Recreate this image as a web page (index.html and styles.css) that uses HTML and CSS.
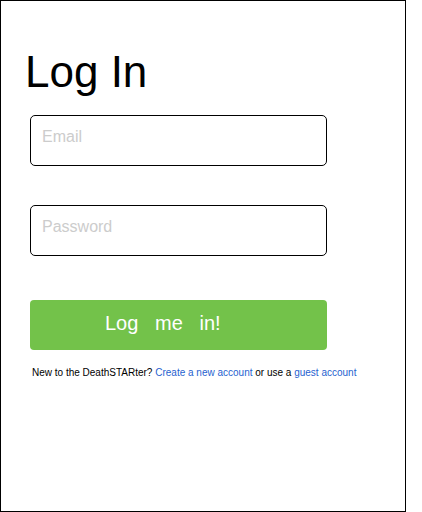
FILE: index.html
```html
<!DOCTYPE html>
<html lang="en">
<head>
<meta charset="utf-8">
<meta name="viewport" content="width=device-width, initial-scale=1">
<title>Log In</title>
<link rel="stylesheet" href="styles.css">
</head>
<body>
<main class="panel">
  <h1 class="title">Log In</h1>
  <form class="form">
    <input class="field" type="email" placeholder="Email" aria-label="Email">
    <input class="field" type="password" placeholder="Password" aria-label="Password">
    <button class="submit" type="submit">Log   me   in!</button>
  </form>
  <p class="note">New to the DeathSTARter? <a href="#create">Create a new account</a> or use a <a href="#guest">guest account</a></p>
</main>
</body>
</html>
```
FILE: styles.css
```css
* {
  box-sizing: border-box;
}

body {
  margin: 0;
  background: #fff;
  color: #000;
  font-family: "Liberation Sans", Arial, sans-serif;
}

.panel {
  min-height: 100vh;
  margin-right: 16px;
  padding: 47px 24px 24px;
  border: 1px solid #000;
}

.title {
  margin: 0;
  font-size: 44px;
  font-weight: 400;
  line-height: 48px;
}

.form {
  display: flex;
  flex-direction: column;
  gap: 39px;
  margin: 19px 54px 0 5px;
}

.field {
  width: 100%;
  height: 51px;
  padding: 0 11px 8px;
  border: 1px solid #000;
  border-radius: 5px;
  background: #fff;
  color: #000;
  font: inherit;
  font-size: 16px;
}

.field::placeholder {
  color: #ccc;
  opacity: 1;
}

.submit {
  height: 50px;
  margin-top: 5px;
  padding: 0 75px 4px;
  border: 0;
  border-radius: 4px;
  background: #73c24a;
  color: #fff;
  font: inherit;
  font-size: 20px;
  text-align: left;
  white-space: pre;
  cursor: pointer;
}

.note {
  margin: 16px 0 0 7px;
  font-size: 10px;
  line-height: 14px;
}

.note a {
  color: #1f62cf;
  text-decoration: none;
}
```
